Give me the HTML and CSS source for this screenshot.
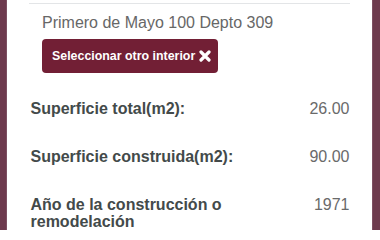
FILE: index.html
```html
<!DOCTYPE html>
<html lang="es">
<head>
<meta charset="utf-8">
<title>Interior</title>
<link rel="stylesheet" href="styles.css">
</head>
<body>
<div class="page">
  <div class="side side-left"></div>
  <main class="panel">
    <hr class="divider">
    <div class="address">
      <p class="address-text">Primero de Mayo 100 Depto 309</p>
      <button class="btn-change" type="button">Seleccionar otro interior
        <svg class="icon-x" viewBox="0 0 12 12" width="12" height="12" aria-hidden="true">
          <path d="M2 2 L10 10 M10 2 L2 10" stroke="#fff" stroke-width="3.2" stroke-linecap="round"/>
        </svg>
      </button>
    </div>
    <div class="details">
      <div class="row">
        <span class="label">Superficie total(m2):</span>
        <span class="value">26.00</span>
      </div>
      <div class="row">
        <span class="label">Superficie construida(m2):</span>
        <span class="value">90.00</span>
      </div>
      <div class="row">
        <span class="label">Año de la construcción o remodelación</span>
        <span class="value">1971</span>
      </div>
    </div>
  </main>
  <div class="side side-right"></div>
</div>
</body>
</html>
```
FILE: styles.css
```css
html, body {
  margin: 0;
  padding: 0;
  background: #ffffff;
}

body {
  font-family: "Liberation Sans", Arial, sans-serif;
  overflow: hidden;
}

.page {
  display: flex;
  width: 380px;
  height: 230px;
}

.side {
  background: #6d3a4d;
}

.side-left {
  width: 7px;
  box-shadow: inset -1px 0 0 #7d5062;
}

.side-right {
  width: 8px;
  box-shadow: inset 1px 0 0 #7d5062;
}

.panel {
  flex: 1;
  background: #ffffff;
  padding: 3px 22px 0 22px;
}

.divider {
  margin: 0;
  border: 0;
  border-top: 1px solid #e3e5e7;
  height: 0;
}

.address {
  margin-left: 13px;
  display: flex;
  flex-direction: column;
  align-items: flex-start;
}

.address-text {
  margin: 10px 0 0 0;
  font-size: 16px;
  line-height: 18px;
  color: #676767;
}

.btn-change {
  margin-top: 7px;
  height: 34px;
  display: inline-flex;
  align-items: center;
  gap: 4px;
  padding: 0 7px 0 10px;
  border: 0;
  border-radius: 4px;
  background: #721f35;
  color: #ffffff;
  font-family: "Liberation Sans", Arial, sans-serif;
  font-weight: bold;
  font-size: 12.4px;
}

.icon-x {
  display: block;
  width: 12px;
  height: 12px;
}

.details {
  margin-top: 27px;
  padding: 0 0.5px 0 1.5px;
  display: flex;
  flex-direction: column;
  gap: 31px;
}

.row {
  display: grid;
  grid-template-columns: 220px 1fr;
  align-items: start;
  font-size: 16px;
  line-height: 17px;
}

.label {
  font-weight: bold;
  color: #434a4a;
}

.value {
  text-align: right;
  color: #6a6a6a;
}
```
